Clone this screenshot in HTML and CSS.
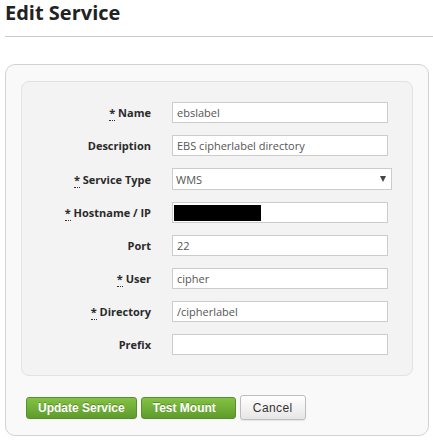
FILE: index.html
```html
<!DOCTYPE html>
<html lang="en">
<head>
    <meta charset="UTF-8">
    <meta name="viewport" content="width=device-width, initial-scale=1.0">
    <title>Edit Service</title>
    <link rel="stylesheet" href="styles.css">
</head>
<body>
    <h2 class="page-title">Edit Service</h2>

    <div class="panel">
        <form class="service-form">
            <div class="fields">
                <label class="field-label" for="name"><abbr title="required">*</abbr> Name</label>
                <input class="field-input" type="text" id="name" value="ebslabel">

                <label class="field-label" for="description">Description</label>
                <input class="field-input" type="text" id="description" value="EBS cipherlabel directory">

                <label class="field-label" for="type"><abbr title="required">*</abbr> Service Type</label>
                <span class="select-wrap">
                    <select class="field-select" id="type">
                        <option>WMS</option>
                    </select>
                </span>

                <label class="field-label" for="host"><abbr title="required">*</abbr> Hostname / IP</label>
                <input class="field-input redacted" type="text" id="host" value="">

                <label class="field-label" for="port">Port</label>
                <input class="field-input" type="text" id="port" value="22">

                <label class="field-label" for="user"><abbr title="required">*</abbr> User</label>
                <input class="field-input" type="text" id="user" value="cipher">

                <label class="field-label" for="directory"><abbr title="required">*</abbr> Directory</label>
                <input class="field-input" type="text" id="directory" value="/cipherlabel">

                <label class="field-label" for="prefix">Prefix</label>
                <input class="field-input" type="text" id="prefix" value="">
            </div>
        </form>

        <div class="actions">
            <button type="button" class="btn btn-green">Update Service</button>
            <button type="button" class="btn btn-green btn-test">Test Mount</button>
            <button type="button" class="btn btn-plain">Cancel</button>
        </div>
    </div>
</body>
</html>
```

FILE: styles.css
```css
body {
    margin: 0;
    padding: 0 0 0 5px;
    font-family: "Open Sans", "DejaVu Sans", sans-serif;
    background-color: #fff;
    color: #333;
}
.page-title {
    margin: 0;
    padding: 0 0 10px 0;
    font-size: 20px;
    line-height: 26px;
    font-weight: bold;
    color: #222;
    border-bottom: 1px solid #cacaca;
}
.panel {
    margin: 27px 4px 0 0;
    padding: 16px 15px 15px 15px;
    background: #f9f9f9;
    border: 1px solid #d2d2d2;
    border-radius: 10px;
}
.service-form {
    background: #f3f3f3;
    border: 1px solid #e2e2e2;
    border-radius: 8px;
    padding: 20px 0 20px 0;
}
.fields {
    display: grid;
    grid-template-columns: 129px 220px;
    column-gap: 21px;
    row-gap: 12px;
    align-items: center;
}
.field-label {
    text-align: right;
    font-size: 11px;
    font-weight: bold;
    color: #2a2a2a;
}
.field-label abbr {
    text-decoration: none;
    border-bottom: 1px dotted #333;
    cursor: help;
}
.field-input {
    width: 216px;
    height: 21px;
    box-sizing: border-box;
    margin: 0;
    padding: 0 4px;
    border: 1px solid #ccc;
    background: #fff;
    font-family: "Open Sans", "DejaVu Sans", sans-serif;
    font-size: 11px;
    color: #555;
}
.redacted {
    background: linear-gradient(#000, #000) no-repeat 1px 2px / 87px 16px, #fff;
}
.select-wrap {
    position: relative;
    display: block;
    width: 220px;
}
.select-wrap::after {
    content: "";
    position: absolute;
    right: 6px;
    top: 8px;
    border-left: 3px solid transparent;
    border-right: 3px solid transparent;
    border-top: 6px solid #444;
}
.field-select {
    display: block;
    width: 220px;
    height: 22px;
    box-sizing: border-box;
    margin: 0;
    padding: 0 3px;
    border: 1px solid #ccc;
    border-radius: 0;
    background: #fff;
    -webkit-appearance: none;
    appearance: none;
    font-family: "Open Sans", "DejaVu Sans", sans-serif;
    font-size: 11px;
    color: #555;
}
.actions {
    display: flex;
    align-items: center;
    gap: 4px;
    margin: 19px 0 0 5px;
}
.btn {
    font-family: "Liberation Sans", Arial, sans-serif;
    font-size: 12px;
    border-radius: 3px;
    cursor: pointer;
    margin: 0;
}
.btn-green {
    height: 22px;
    padding: 0 11px;
    color: #fff;
    font-weight: bold;
    border: 1px solid #57902a;
    background: linear-gradient(#84c244, #5d9c2b);
    text-shadow: 0 -1px 0 rgba(0, 0, 0, 0.25);
}
.btn-test {
    padding: 0 19px 0 11px;
}
.btn-plain {
    height: 25px;
    padding: 0 12px;
    color: #333;
    letter-spacing: 0.4px;
    border: 1px solid #bdbdbd;
    background: linear-gradient(#ffffff, #e6e6e6);
    box-shadow: 0 1px 1px rgba(0, 0, 0, 0.08);
}
```
